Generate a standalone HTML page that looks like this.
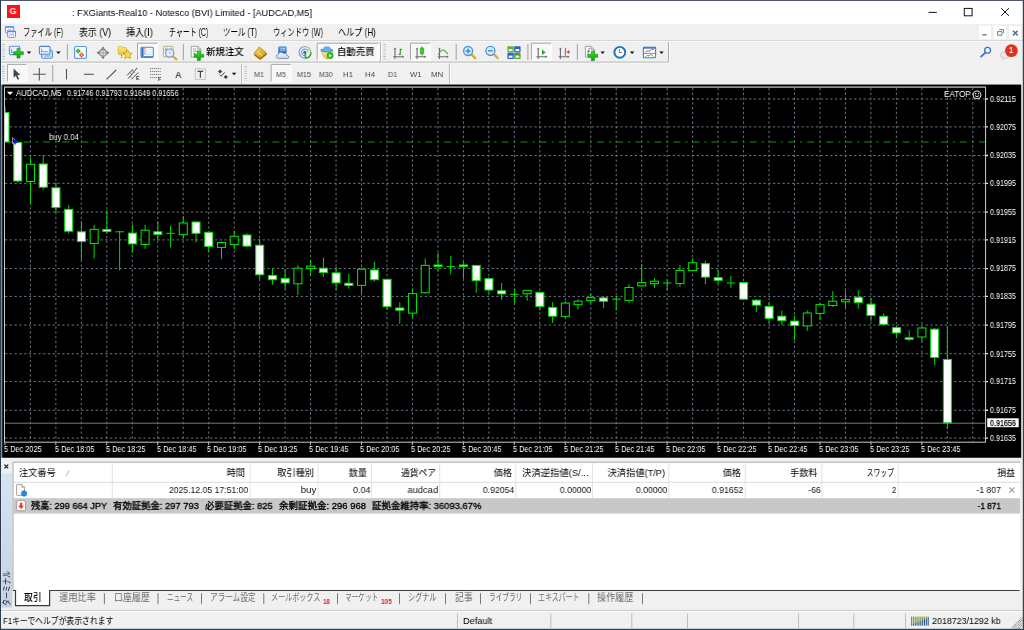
<!DOCTYPE html>
<html lang="ja">
<head>
<meta charset="utf-8">
<title>FXGiants-Real10 - Notesco (BVI) Limited - [AUDCAD,M5]</title>
<style>
html,body{margin:0;padding:0}
body{width:1024px;height:630px;overflow:hidden;position:relative;background:#f0f0f0;font-family:"Liberation Sans","Noto Sans CJK JP",sans-serif;color:#000}
.t{position:absolute;white-space:nowrap;display:block;will-change:transform}
.a{position:absolute}
svg{position:absolute;overflow:visible}

#titlebar{left:1px;top:1px;width:1022px;height:23.3px;background:#fff}
#menubar{left:1px;top:24.3px;width:1022px;height:16.2px;background:#f0f0f0}
#tb1{left:1px;top:41px;width:1022px;height:22px;background:#f0f0f0}
#tb2{left:1px;top:63px;width:1022px;height:21px;background:#f0f0f0}
#chartwin{left:2.2px;top:84.4px;width:1019px;height:373.3px}
#terminal{left:1px;top:457.7px;width:1022px;height:152px;background:#f0f0f0}
#statusbar{left:1px;top:610px;width:1022px;height:19px;background:#f0f0f0}

</style>
</head>
<body>
<div class="a" id="titlebar"></div>
<div class="a" id="menubar"></div>
<div class="a" id="tb1"></div>
<div class="a" id="tb2"></div>
<div class="a" id="chartwin"></div>
<div class="a" id="terminal"></div>
<div class="a" id="statusbar"></div>
<div class="a" style="left:7.1px;top:5.4px;width:12.9px;height:12.9px;background:#fa1418"></div>
<span class="t" id="t1" style="font-size:9.20px;line-height:9.20px;top:7.30px;color:#fff;font-weight:bold;left:13.45px;transform-origin:50% 50%;transform:translateX(-50%) scaleX(0.9642);">G</span>
<span class="t" id="t2" style="font-size:9.60px;line-height:9.60px;top:7.80px;color:#000;left:71.60px;transform-origin:0 50%;transform:scaleX(0.9558);">: FXGiants-Real10 - Notesco (BVI) Limited - [AUDCAD,M5]</span>
<svg class="a" style="left:920px;top:1px" width="103" height="23" viewBox="920 1 103 23"><path d="M928.6 12.4H936.8" stroke="#111" stroke-width="1" fill="none"/><rect x="964.3" y="8.4" width="7.8" height="7.4" stroke="#111" stroke-width="1" fill="none"/><path d="M1001.2 8.2L1008.9 15.8M1008.9 8.2L1001.2 15.8" stroke="#111" stroke-width="1" fill="none"/></svg>
<svg class="a" style="left:4px;top:25px" width="14" height="14" viewBox="4 25 14 14"><rect x="5.4" y="26.7" width="8.3" height="6.2" rx="0.8" fill="#fdfdff" stroke="#6a94f0" stroke-width="1"/><path d="M5.2 27h8.7" stroke="#5c88ee" stroke-width="1.5"/><path d="M7 31l1.4-1.6l1.2 1l1.6-1.6" stroke="#6a94f0" stroke-width="0.8" fill="none"/><rect x="7.6" y="31.2" width="7.9" height="6.1" rx="0.8" fill="#fdfdff" stroke="#6a94f0" stroke-width="1"/><path d="M7.4 31.5h8.3" stroke="#5c88ee" stroke-width="1.5"/><path d="M9.2 35.8l1.2-1.8l1.3 1.2l1.3-1.8l0.9 2.4" stroke="#6a94f0" stroke-width="0.8" fill="none"/></svg>
<span class="t" id="t3" style="font-size:10.30px;line-height:10.30px;top:27.55px;color:#000;left:22.90px;transform-origin:0 50%;transform:scaleX(0.7028);">ファイル (F)</span>
<span class="t" id="t4" style="font-size:10.30px;line-height:10.30px;top:27.55px;color:#000;left:78.60px;transform-origin:0 50%;transform:scaleX(0.8632);">表示 (V)</span>
<span class="t" id="t5" style="font-size:10.30px;line-height:10.30px;top:27.55px;color:#000;left:126.40px;transform-origin:0 50%;transform:scaleX(0.8808);">挿入(I)</span>
<span class="t" id="t6" style="font-size:10.30px;line-height:10.30px;top:27.55px;color:#000;left:168.60px;transform-origin:0 50%;transform:scaleX(0.6747);">チャート (C)</span>
<span class="t" id="t7" style="font-size:10.30px;line-height:10.30px;top:27.55px;color:#000;left:222.90px;transform-origin:0 50%;transform:scaleX(0.7249);">ツール (T)</span>
<span class="t" id="t8" style="font-size:10.30px;line-height:10.30px;top:27.55px;color:#000;left:272.60px;transform-origin:0 50%;transform:scaleX(0.7050);">ウィンドウ (W)</span>
<span class="t" id="t9" style="font-size:10.30px;line-height:10.30px;top:27.55px;color:#000;left:337.90px;transform-origin:0 50%;transform:scaleX(0.7867);">ヘルプ (H)</span>
<div class="a" style="left:978.6px;top:25.7px;width:12.8px;height:13.6px;background:#fff"></div>
<div class="a" style="left:993.6px;top:25.7px;width:12.8px;height:13.6px;background:#fff"></div>
<div class="a" style="left:1008.6px;top:25.7px;width:12.8px;height:13.6px;background:#fff"></div>
<svg class="a" style="left:978px;top:25px" width="45" height="15" viewBox="978 25 45 15"><path d="M982.3 34.8h4.4" stroke="#6a7b95" stroke-width="1.4"/><path d="M999.2 29.6h4.3v3.4M997.6 31.6h4.4v3.6h-4.4z" stroke="#6a7b95" stroke-width="1" fill="none"/><path d="M1013 30.8l4.6 4.6M1017.6 30.8l-4.6 4.6" stroke="#5a6e8c" stroke-width="1.5"/></svg>
<svg class="a" style="left:0;top:40px" width="1024" height="45" viewBox="0 40 1024 45"><defs>
<linearGradient id="gGreen" x1="0" y1="0" x2="0" y2="1"><stop offset="0" stop-color="#3be03b"/><stop offset="1" stop-color="#0aa00a"/></linearGradient>
<linearGradient id="gGold" x1="0" y1="0" x2="1" y2="1"><stop offset="0" stop-color="#f8dc60"/><stop offset="1" stop-color="#c89018"/></linearGradient>
<linearGradient id="gBlue" x1="0" y1="0" x2="0" y2="1"><stop offset="0" stop-color="#5aa8f0"/><stop offset="1" stop-color="#1c62c0"/></linearGradient>
<linearGradient id="gCloud" x1="0" y1="0" x2="0" y2="1"><stop offset="0" stop-color="#ffffff"/><stop offset="1" stop-color="#c4d0e4"/></linearGradient>
<linearGradient id="gFold" x1="0" y1="0" x2="0" y2="1"><stop offset="0" stop-color="#fbe98a"/><stop offset="1" stop-color="#e8c440"/></linearGradient>
</defs><path d="M1 40.6H1023" stroke="#d4d4d4" stroke-width="1"/><path d="M1 41.5H1023" stroke="#fafafa" stroke-width="0.8"/><path d="M1 62.2H668.5V42" stroke="#aaaaaa" stroke-width="1" fill="none"/><path d="M1 63.2H669.5V42" stroke="#fbfbfb" stroke-width="0.9" fill="none"/><path d="M380.5 42V62" stroke="#b4b4b4" stroke-width="1"/><path d="M381.5 42V62" stroke="#fbfbfb" stroke-width="0.9"/><path d="M241.6 63.7V84" stroke="#b4b4b4" stroke-width="1"/><path d="M242.6 63.7V84" stroke="#fbfbfb" stroke-width="0.9"/><path d="M449.4 63.7V84" stroke="#b4b4b4" stroke-width="1"/><path d="M450.4 63.7V84" stroke="#fbfbfb" stroke-width="0.9"/><path d="M3.5 44.0V60.0" stroke="#b8b8b8" stroke-width="2.4" stroke-dasharray="0.9 1.5"/><path d="M384.5 44.0V60.0" stroke="#b8b8b8" stroke-width="2.4" stroke-dasharray="0.9 1.5"/><path d="M3.5 66.0V81.0" stroke="#b8b8b8" stroke-width="2.4" stroke-dasharray="0.9 1.5"/><path d="M245.6 66.0V81.0" stroke="#b8b8b8" stroke-width="2.4" stroke-dasharray="0.9 1.5"/><path d="M67.4 44.0V60.0" stroke="#a8a8a8" stroke-width="1.1"/><path d="M183.4 44.0V60.0" stroke="#a8a8a8" stroke-width="1.1"/><path d="M456.2 44.0V60.0" stroke="#a8a8a8" stroke-width="1.1"/><path d="M527.9 44.0V60.0" stroke="#a8a8a8" stroke-width="1.1"/><path d="M577.4 44.0V60.0" stroke="#a8a8a8" stroke-width="1.1"/><path d="M52.7 65.0V82.0" stroke="#a8a8a8" stroke-width="1.1"/><rect x="137.5" y="43.2" width="20.0" height="17.0" fill="#f8f8f8"/><path d="M137.5 60.2V43.2H157.5" stroke="#a6a6a6" stroke-width="1" fill="none"/><path d="M157.5 43.2V60.2H137.5" stroke="#fff" stroke-width="1" fill="none"/><rect x="317.2" y="43.2" width="61.6" height="17.0" fill="#f8f8f8"/><path d="M317.2 60.2V43.2H378.8" stroke="#a6a6a6" stroke-width="1" fill="none"/><path d="M378.8 43.2V60.2H317.2" stroke="#fff" stroke-width="1" fill="none"/><rect x="410.5" y="43.2" width="19.8" height="17.0" fill="#f8f8f8"/><path d="M410.5 60.2V43.2H430.3" stroke="#a6a6a6" stroke-width="1" fill="none"/><path d="M430.3 43.2V60.2H410.5" stroke="#fff" stroke-width="1" fill="none"/><rect x="531.4" y="43.2" width="20.0" height="17.0" fill="#f8f8f8"/><path d="M531.4 60.2V43.2H551.4" stroke="#a6a6a6" stroke-width="1" fill="none"/><path d="M551.4 43.2V60.2H531.4" stroke="#fff" stroke-width="1" fill="none"/><rect x="7.5" y="64.4" width="19.3" height="17.3" fill="#f8f8f8"/><path d="M7.5 81.7V64.4H26.8" stroke="#a6a6a6" stroke-width="1" fill="none"/><path d="M26.8 64.4V81.7H7.5" stroke="#fff" stroke-width="1" fill="none"/><rect x="271.1" y="64.4" width="20.0" height="17.3" fill="#f8f8f8"/><path d="M271.1 81.7V64.4H291.1" stroke="#a6a6a6" stroke-width="1" fill="none"/><path d="M291.1 64.4V81.7H271.1" stroke="#fff" stroke-width="1" fill="none"/><path d="M26.8 51.6h4.4l-2.2 2.4z" fill="#111"/><path d="M56.2 51.6h4.4l-2.2 2.4z" fill="#111"/><path d="M600.5 51.6h4.4l-2.2 2.4z" fill="#111"/><path d="M629.9 51.6h4.4l-2.2 2.4z" fill="#111"/><path d="M659.3 51.6h4.4l-2.2 2.4z" fill="#111"/><path d="M231.9 72.8h4.4l-2.2 2.4z" fill="#111"/><rect x="9.4" y="46.2" width="10.2" height="8.4" rx="1.2" fill="#e6f0fb" stroke="#5a93d6" stroke-width="1.1"/><path d="M11.5 49v3.6M11 52.3h6" stroke="#5a7fb0" stroke-width="0.7" fill="none"/><path d="M17.00 48.40h3.00v3.30h3.30v3.00h-3.30v3.30h-3.00v-3.30h-3.30v-3.00h3.30z" fill="url(#gGreen)" stroke="#0c8a0c" stroke-width="0.6"/><rect x="41.6" y="50.3" width="10.8" height="8" rx="1.2" fill="#d8e6f6" stroke="#5a93d6" stroke-width="1.1"/><rect x="39.4" y="46.4" width="10.6" height="7.8" rx="1.2" fill="#eef5fc" stroke="#4a86cf" stroke-width="1.1"/><path d="M41.6 48.4v3.8M41.2 51.7h7.2" stroke="#5a7fb0" stroke-width="0.7" fill="none"/><path d="M44.5 56h6" stroke="#5a7fb0" stroke-width="0.7"/><rect x="74.6" y="46.5" width="11.8" height="11.8" rx="1.3" fill="#fff" stroke="#5b9be0" stroke-width="1.2"/><path d="M78.2 48.2l2.6 2.8l-2.6 2.8l-2.6-2.8z" fill="#2aa52a"/><path d="M81.6 52l2.7 2.9l-2.7 2.9l-2.7-2.9z" fill="#e8602c"/><path d="M78.2 49.6v2.4M81.6 53.6v2.4" stroke="#fff" stroke-width="0.6"/><circle cx="103" cy="52.8" r="3.4" fill="#dedede" stroke="#808080" stroke-width="1.1"/><path d="M103 48.4V57.2M98.6 52.8H107.4" stroke="#9c9c9c" stroke-width="0.8"/><path d="M103 46.4l1.7 2.4h-3.4zM103 59.2l1.7-2.4h-3.4zM96.6 52.8l2.4-1.7v3.4zM109.4 52.8l-2.4-1.7v3.4z" fill="#707070"/><path d="M118.2 47.4q0-1 1-1h2.6l1 1.2h3q0.8 0 0.8 0.9v5.1q0 0.8-0.8 0.8h-6.6q-1 0-1-1z" fill="url(#gFold)" stroke="#d8b030" stroke-width="0.7"/><path d="M121.5 55.2v3.6" stroke="#333" stroke-width="0.8" stroke-dasharray="1 0.8"/><path d="M127.6 49.8l1.4 3l3.2 0.4l-2.4 2.2l0.7 3.2l-2.9-1.6l-2.9 1.6l0.7-3.2l-2.4-2.2l3.2-0.4z" fill="#f6da50" stroke="#c79a1c" stroke-width="0.8" stroke-linejoin="round"/><rect x="141" y="47.2" width="12.3" height="10.2" rx="1.1" fill="#fff" stroke="#4a86d2" stroke-width="1.1"/><rect x="141.4" y="47.7" width="2.2" height="9.2" fill="#3a70bc"/><path d="M143.8 56.6h9.2" stroke="#4a86d2" stroke-width="1"/><path d="M144.2 49.9H152.8M144.2 52.2H152.8M144.2 54.5H152.8" stroke="#cfe0f8" stroke-width="1"/><path d="M144.3 48.7h1.2M144.3 53.4h1.2" stroke="#e03030" stroke-width="0.9"/><path d="M144.3 51.1h1.2" stroke="#447744" stroke-width="0.9"/><rect x="163.4" y="46.4" width="9.6" height="10.4" rx="0.8" fill="#f6f2e6" stroke="#b8a880" stroke-width="0.9"/><path d="M165.4 48v3M167 47.6v2.4M171 48v2.6" stroke="#7a86a0" stroke-width="0.7"/><path d="M172.8 56.2l3.6 3.2" stroke="#dcaa28" stroke-width="2.2" stroke-linecap="round"/><circle cx="169.7" cy="53.1" r="4.1" fill="#e4f0fb" fill-opacity="0.92" stroke="#66a2e2" stroke-width="1.2"/><path d="M169.6 50.8v2.4h1.6" stroke="#8aaad0" stroke-width="0.7" fill="none"/><path d="M191.20 46.30h6.60l3.00 3.00v7.80h-9.60z" fill="#fdfdfd" stroke="#8c8c8c" stroke-width="0.8" stroke-linejoin="round"/><path d="M197.80 46.30v3.00h3.00" fill="#ddd" stroke="#8c8c8c" stroke-width="0.7"/><path d="M193 49h3M193 51.2h5.4M193 53.4h2.6" stroke="#7a7a7a" stroke-width="0.7"/><path d="M197.40 50.90h3.00v3.30h3.30v3.00h-3.30v3.30h-3.00v-3.30h-3.30v-3.00h3.30z" fill="url(#gGreen)" stroke="#0c8a0c" stroke-width="0.6"/><path d="M254 53.6l5.2-6.6l7.5 6.2l-6.6 5.3z" fill="url(#gGold)" stroke="#b48418" stroke-width="0.8" stroke-linejoin="round"/><path d="M254.2 54.5l6 4.5l6.4-5.1" stroke="#a06c10" stroke-width="1.5" fill="none"/><path d="M257 51.6l5.6 4.4" stroke="#fbe88a" stroke-width="0.8"/><rect x="278.2" y="46.3" width="8.4" height="7.4" rx="1.2" fill="url(#gBlue)"/><path d="M281 47.8v3.4M282.4 48.6h2.8M282.4 50.2h2.8" stroke="#e6f2ff" stroke-width="0.8"/><path d="M278.6 58.5q-2.4 0-2.4-2.1q0-2 2.2-2q0.5-2.1 2.7-2.1q1.7 0 2.5 1.5q0.9-0.7 2.1-0.2q1.1 0.6 1 1.8q2.2 0.1 2.2 1.6q0 1.5-2 1.5z" fill="url(#gCloud)" stroke="#7088b4" stroke-width="0.8"/><path d="M304.9 49.1a3.2 3.2 0 0 0 0 6.4M304.9 46.5a5.8 5.8 0 0 0 0 11.6" stroke="#6a8cd8" stroke-width="1.1" fill="none" opacity="0.9"/><path d="M304.9 49.1a3.2 3.2 0 0 1 3.2 3.2M304.9 46.5a5.8 5.8 0 0 1 5.8 5.8" stroke="#7ab87a" stroke-width="1.1" fill="none" opacity="0.9"/><path d="M310.9 52.3a6 6 0 0 1-5 5.9" stroke="#3ea63e" stroke-width="1.7" fill="none"/><path d="M305.4 53v5.6" stroke="#3ea63e" stroke-width="1.7"/><circle cx="304.8" cy="52.2" r="1.5" fill="#2a68d0"/><path d="M321.2 51h11.6l-1.6 4.6l-4 3.8l-3.6-2.6z" fill="url(#gFold)" stroke="#d0a828" stroke-width="0.6" stroke-linejoin="round"/><ellipse cx="326.8" cy="50.3" rx="6.4" ry="2.1" fill="#3f96dc"/><ellipse cx="326.9" cy="48.5" rx="3.5" ry="2.3" fill="#62b0ec"/><path d="M322 50.2q4.8 1.6 9.6 0" stroke="#8ccaf4" stroke-width="0.6" fill="none"/><circle cx="330.1" cy="55.6" r="3.3" fill="#18a818"/><circle cx="330.1" cy="55.6" r="2.5" fill="#3cd03c" opacity="0.55"/><path d="M329.1 53.9l2.9 1.7l-2.9 1.7z" fill="#fff"/><path d="M395.0 48.4V58.9M393.2 56.7H403.4" stroke="#6a6a6a" stroke-width="1.1" fill="none"/><path d="M395.0 47.4l1.3 1.9h-2.6zM404.2 56.7l-1.9 1.3v-2.6z" fill="#6a6a6a"/><path d="M400.3 48.8V55M400.3 49.4h1.6M400.3 54.4h-1.6" stroke="#2aa02a" stroke-width="1.1" fill="none"/><path d="M417.1 48.4V58.9M415.3 56.7H425.5" stroke="#6a6a6a" stroke-width="1.1" fill="none"/><path d="M417.1 47.4l1.3 1.9h-2.6zM426.3 56.7l-1.9 1.3v-2.6z" fill="#6a6a6a"/><path d="M422 46.4V55.6" stroke="#2aa02a" stroke-width="0.9"/><rect x="420.3" y="47.9" width="3.4" height="6" rx="0.6" fill="#2ed02e" stroke="#1a9a1a" stroke-width="0.6"/><path d="M439.5 48.4V58.9M437.7 56.7H447.9" stroke="#6a6a6a" stroke-width="1.1" fill="none"/><path d="M439.5 47.4l1.3 1.9h-2.6zM448.7 56.7l-1.9 1.3v-2.6z" fill="#6a6a6a"/><path d="M438.2 54.6q3-4.6 4.9-4.6q1.4 0 4.9 4.2" stroke="#3aa83a" stroke-width="1.1" fill="none"/><path d="M471.7 54.6l3.6 3.6" stroke="#d8aa28" stroke-width="2.2" stroke-linecap="round"/><circle cx="468.1" cy="51.0" r="4.5" fill="#d8ecfb" stroke="#4a92dc" stroke-width="1.3"/><path d="M465.6 51.0h5M468.1 48.5v5" stroke="#3a82d0" stroke-width="1.3"/><path d="M494.0 54.4l3.6 3.6" stroke="#d8aa28" stroke-width="2.2" stroke-linecap="round"/><circle cx="490.4" cy="50.8" r="4.5" fill="#d8ecfb" stroke="#4a92dc" stroke-width="1.3"/><path d="M487.9 50.8h5" stroke="#3a82d0" stroke-width="1.3"/><rect x="507.4" y="46.2" width="6.4" height="6.2" rx="0.8" fill="#5cae34"/><rect x="508.7" y="49.0" width="3.8" height="2.2" fill="#f4f8ff"/><rect x="514.2" y="46.2" width="6.4" height="6.2" rx="0.8" fill="#2c5ccc"/><rect x="515.5" y="49.0" width="3.8" height="2.2" fill="#f4f8ff"/><rect x="507.4" y="52.8" width="6.4" height="6.2" rx="0.8" fill="#2c62d0"/><rect x="508.7" y="55.6" width="3.8" height="2.2" fill="#f4f8ff"/><rect x="514.2" y="52.8" width="6.4" height="6.2" rx="0.8" fill="#4aa42c"/><rect x="515.5" y="55.6" width="3.8" height="2.2" fill="#f4f8ff"/><path d="M538.2 48.4V58.9M536.4 56.7H546.6" stroke="#6a6a6a" stroke-width="1.1" fill="none"/><path d="M538.2 47.4l1.3 1.9h-2.6zM547.4 56.7l-1.9 1.3v-2.6z" fill="#6a6a6a"/><path d="M542 49.5l3.6 2.7l-3.6 2.7z" fill="#22b022"/><path d="M560.4 48.4V58.9M558.6 56.7H568.8" stroke="#6a6a6a" stroke-width="1.1" fill="none"/><path d="M560.4 47.4l1.3 1.9h-2.6zM569.6 56.7l-1.9 1.3v-2.6z" fill="#6a6a6a"/><path d="M565.4 47.9V55.8" stroke="#3a86c8" stroke-width="1.1"/><path d="M566.4 52l2.6-2v1.2h0.9v1.6h-0.9v1.2z" fill="#e0501c"/><path d="M585.40 46.30h5.80l3.00 3.00v7.80h-8.80z" fill="#fdfdfd" stroke="#8c8c8c" stroke-width="0.8" stroke-linejoin="round"/><path d="M591.20 46.30v3.00h3.00" fill="#ddd" stroke="#8c8c8c" stroke-width="0.7"/><path d="M590.4 48.4q-1.6-0.4-1.8 1.4l-0.6 4.6q-0.2 1.2-1.2 1M587.2 51.2h2.8" stroke="#555" stroke-width="0.7" fill="none"/><path d="M591.40 51.00h3.00v3.30h3.30v3.00h-3.30v3.30h-3.00v-3.30h-3.30v-3.00h3.30z" fill="url(#gGreen)" stroke="#0c8a0c" stroke-width="0.6"/><circle cx="619.8" cy="52.3" r="5.4" fill="#fbfdff" stroke="#1c70c8" stroke-width="1.9"/><path d="M619.4 49.2v3.3h2.6" stroke="#555" stroke-width="0.8" fill="none"/><rect x="643.4" y="47.2" width="12.2" height="10.6" rx="0.8" fill="#fff" stroke="#3c7cd2" stroke-width="1.1"/><path d="M643.4 47.8h12.2" stroke="#3c7cd2" stroke-width="1.8"/><path d="M643.6 53.4h11.8" stroke="#3c7cd2" stroke-width="0.8"/><path d="M645.4 52l2.4-1.4l1.6 0.6l2.2-1.6l2.4-0.4" stroke="#d8502c" stroke-width="1" fill="none"/><path d="M645.4 56.8l2.2-1.4l1.4 0.6l2-1.6l2.6 2.2" stroke="#3aa83a" stroke-width="0.9" fill="none"/><circle cx="987.6" cy="50.2" r="2.9" fill="#f4f8ff" stroke="#3a6ad0" stroke-width="1.3"/><path d="M985.4 52.6l-4.4 4" stroke="#3a6ad0" stroke-width="1.7" stroke-linecap="round"/><path d="M1000.5 55.2q0-3.6 4.4-3.6q4.4 0 4.4 3.4q0 3.2-4.6 3.2l-2 1.4l0.3-1.8q-2.5-0.8-2.5-2.6z" fill="#e8e8e8" stroke="#b8b8b8" stroke-width="0.6"/><circle cx="1011.4" cy="50.7" r="6.4" fill="#e03020"/><path d="M13.6 68.4v9.4l2.2-2.1l1.9 4l1.5-0.7l-1.9-3.9h3z" fill="#444"/><path d="M39.3 68.1V80.4M33 74.3H45.7" stroke="#555" stroke-width="1.1"/><path d="M66.5 69V79.5" stroke="#555" stroke-width="1.1"/><path d="M84 74.3H93.8" stroke="#555" stroke-width="1.1"/><path d="M106.5 79.3L116.2 70" stroke="#555" stroke-width="1.1"/><path d="M127.1 75.4L132.9 69.3M128.1 78.6L137.1 67.9M131.5 79.3L138.3 72.5" stroke="#4a4a4a" stroke-width="1" fill="none"/><path d="M129.2 72.2l3.6 3M131.4 70l3.8 3.2M130 76.4l1.6 1.2" stroke="#6a6a6a" stroke-width="0.7" fill="none"/><path d="M150 68.6h10.8M150 71.5h10.8M150 74.5h10.8M150 77.6h8" stroke="#707070" stroke-width="0.9" stroke-dasharray="1.3 0.7"/><rect x="195.2" y="68.8" width="10.2" height="10.6" fill="none" stroke="#888" stroke-width="0.8" stroke-dasharray="1 0.9"/><path d="M197.6 71.4h5.6M200.4 71.4v6.4" stroke="#444" stroke-width="1.2"/><path d="M220.1 69.6l2.2 2l-2.2 2l-2.2-2zM225.8 74.9l2.2 2l-2.2 2l-2.2-2z" fill="#444"/><path d="M219.6 74.6l1.6 1.6l3.4-3.8" stroke="#444" stroke-width="1" fill="none"/></svg>
<span class="t" id="t10" style="font-size:9.60px;line-height:9.60px;top:46.90px;color:#000;font-weight:500;left:206.00px;transform-origin:0 50%;transform:scaleX(0.9850);">新規注文</span>
<span class="t" id="t11" style="font-size:9.60px;line-height:9.60px;top:46.90px;color:#000;font-weight:500;left:336.90px;transform-origin:0 50%;transform:scaleX(0.9798);">自動売買</span>
<span class="t" id="t12" style="font-size:8.60px;line-height:8.60px;top:46.30px;color:#fff;font-weight:bold;left:1011.40px;transform-origin:50% 50%;transform:translateX(-50%) scaleX(0.7529);">1</span>
<span class="t" id="t13" style="font-size:9.80px;line-height:9.80px;top:69.50px;color:#555;font-weight:bold;left:174.80px;transform-origin:0 50%;transform:scaleX(0.9325);">A</span>
<span class="t" id="t14" style="font-size:5.40px;line-height:5.40px;top:76.30px;color:#333;font-weight:bold;left:135.90px;transform-origin:0 50%;transform:scaleX(0.9420);">E</span>
<span class="t" id="t15" style="font-size:5.40px;line-height:5.40px;top:76.60px;color:#333;font-weight:bold;left:158.20px;transform-origin:0 50%;">F</span>
<span class="t" id="t16" style="font-size:7.80px;line-height:7.80px;top:70.50px;color:#4a4a4a;left:253.50px;transform-origin:0 50%;transform:scaleX(0.9314);">M1</span>
<span class="t" id="t17" style="font-size:7.80px;line-height:7.80px;top:70.50px;color:#4a4a4a;left:275.90px;transform-origin:0 50%;transform:scaleX(0.9222);">M5</span>
<span class="t" id="t18" style="font-size:7.80px;line-height:7.80px;top:70.50px;color:#4a4a4a;left:296.60px;transform-origin:0 50%;transform:scaleX(0.9228);">M15</span>
<span class="t" id="t19" style="font-size:7.80px;line-height:7.80px;top:70.50px;color:#4a4a4a;left:319.00px;transform-origin:0 50%;transform:scaleX(0.8964);">M30</span>
<span class="t" id="t20" style="font-size:7.80px;line-height:7.80px;top:70.50px;color:#4a4a4a;left:343.20px;transform-origin:0 50%;transform:scaleX(0.9530);">H1</span>
<span class="t" id="t21" style="font-size:7.80px;line-height:7.80px;top:70.50px;color:#4a4a4a;left:364.70px;transform-origin:0 50%;transform:scaleX(1.0132);">H4</span>
<span class="t" id="t22" style="font-size:7.80px;line-height:7.80px;top:70.50px;color:#4a4a4a;left:388.00px;transform-origin:0 50%;transform:scaleX(0.9229);">D1</span>
<span class="t" id="t23" style="font-size:7.80px;line-height:7.80px;top:70.50px;color:#4a4a4a;left:409.70px;transform-origin:0 50%;transform:scaleX(0.9741);">W1</span>
<span class="t" id="t24" style="font-size:7.80px;line-height:7.80px;top:70.50px;color:#4a4a4a;left:430.90px;transform-origin:0 50%;transform:scaleX(1.0049);">MN</span>
<svg class="a" style="left:0;top:84px" width="1024" height="374" viewBox="0 84 1024 374"><rect x="1" y="84.55" width="1.3" height="373.2" fill="#8c8c8c"/><rect x="2.2" y="84.55" width="1019" height="373.2" fill="#000"/><defs><clipPath id="plot"><rect x="5" y="87.9" width="980" height="354"/></clipPath></defs><path d="M5 99.00H985.2M5 126.86H985.2M5 155.52H985.2M5 183.38H985.2M5 212.04H985.2M5 239.90H985.2M5 268.55H985.2M5 296.41H985.2M5 325.07H985.2M5 353.72H985.2M5 381.58H985.2M5 410.24H985.2M5 438.10H985.2" stroke="#6c7c8c" stroke-width="0.95" stroke-dasharray="2.3 2.47" fill="none" clip-path="url(#plot)"/><path d="M30.40 88V442M55.87 88V442M81.34 88V442M106.81 88V442M132.28 88V442M157.75 88V442M183.22 88V442M208.69 88V442M234.16 88V442M259.63 88V442M285.10 88V442M310.57 88V442M336.04 88V442M361.51 88V442M386.98 88V442M412.45 88V442M437.92 88V442M463.39 88V442M488.86 88V442M514.33 88V442M539.80 88V442M565.27 88V442M590.74 88V442M616.21 88V442M641.68 88V442M667.15 88V442M692.62 88V442M718.09 88V442M743.56 88V442M769.03 88V442M794.50 88V442M819.97 88V442M845.44 88V442M870.91 88V442M896.38 88V442M921.85 88V442M947.32 88V442M972.79 88V442" stroke="#6c7c8c" stroke-width="0.95" stroke-dasharray="2.3 2.47" fill="none" clip-path="url(#plot)"/><path d="M4.9 142H985.2" stroke="#1c8c1c" stroke-width="1.15" stroke-dasharray="7.0 4.94 2.2 4.96" fill="none"/><path d="M5 423.2H985.2" stroke="#6c7a89" stroke-width="1" fill="none"/><g clip-path="url(#plot)"><path d="M5.00 106.70V141.90M17.73 141.50V182.50M30.47 157.50V204.40M43.20 155.20V189.70M55.94 182.40V212.80M68.67 205.20V233.70M81.41 221.40V260.00M94.14 224.90V258.50M106.88 210.30V233.70M119.61 231.00V270.40M132.35 224.50V252.70M145.08 224.90V248.75M157.82 221.60V240.20M170.56 225.90V247.40M183.29 216.10V238.60M196.02 221.50V242.50M208.76 231.50V251.90M221.50 241.50V259.10M234.23 230.80V249.30M246.96 233.40V247.10M259.70 238.90V279.30M272.44 268.20V284.80M285.17 269.20V289.10M297.90 265.10V295.00M310.64 259.80V275.00M323.38 257.50V277.00M336.11 267.00V290.10M348.84 273.50V288.70M361.58 267.60V293.60M374.31 261.80V281.70M387.05 278.70V310.00M399.78 302.20V323.90M412.52 289.10V317.00M425.25 258.50V293.60M437.99 252.90V271.30M450.72 255.90V274.40M463.46 261.70V278.70M476.19 265.00V292.80M488.93 277.10V293.75M501.66 283.00V299.80M514.40 289.50V303.10M527.13 290.00V300.80M539.87 291.80V310.40M552.61 302.10V323.00M565.34 300.80V317.80M578.07 299.20V309.40M590.81 293.40V303.70M603.54 296.30V308.00M616.28 296.30V310.40M629.01 284.20V303.10M641.75 264.10V286.50M654.49 278.10V287.90M667.22 279.70V290.40M679.95 265.00V287.10M692.69 258.20V270.90M705.42 260.70V284.00M718.16 270.30V283.60M730.89 276.20V287.90M743.63 282.20V299.60M756.37 299.20V311.90M769.10 301.80V322.70M781.83 310.40V325.00M794.57 316.00V340.20M807.30 310.40V330.90M820.04 302.80V319.80M832.77 291.10V307.10M845.51 290.10V308.10M858.25 290.10V308.70M870.98 297.90V321.20M883.71 313.40V325.10M896.45 325.30V337.40M909.18 330.20V341.30M921.92 326.10V341.90M934.65 328.00V365.30M947.39 326.20V428.70" stroke="#00e400" stroke-width="0.95" fill="none"/><rect x="1.00" y="112.60" width="8.0" height="29.30" fill="#fff" stroke="#00e400" stroke-width="1.05"/><rect x="13.73" y="142.50" width="8.0" height="38.50" fill="#fff" stroke="#00e400" stroke-width="1.05"/><rect x="26.47" y="164.30" width="8.0" height="17.20" fill="#000" stroke="#00e400" stroke-width="1.05"/><rect x="39.20" y="164.00" width="8.0" height="23.20" fill="#fff" stroke="#00e400" stroke-width="1.05"/><rect x="51.94" y="187.80" width="8.0" height="19.70" fill="#fff" stroke="#00e400" stroke-width="1.05"/><rect x="64.67" y="209.40" width="8.0" height="21.80" fill="#fff" stroke="#00e400" stroke-width="1.05"/><rect x="77.41" y="231.80" width="8.0" height="9.70" fill="#fff" stroke="#00e400" stroke-width="1.05"/><rect x="90.14" y="229.40" width="8.0" height="14.10" fill="#000" stroke="#00e400" stroke-width="1.05"/><rect x="102.88" y="229.40" width="8.0" height="2.00" fill="#fff" stroke="#00e400" stroke-width="1.05"/><path d="M115.41 231.80H123.81" stroke="#00e400" stroke-width="1"/><rect x="128.35" y="233.10" width="8.0" height="10.80" fill="#fff" stroke="#00e400" stroke-width="1.05"/><rect x="141.08" y="230.20" width="8.0" height="14.30" fill="#000" stroke="#00e400" stroke-width="1.05"/><rect x="153.82" y="231.80" width="8.0" height="2.50" fill="#fff" stroke="#00e400" stroke-width="1.05"/><path d="M166.36 233.30H174.75" stroke="#00e400" stroke-width="1"/><rect x="179.29" y="223.00" width="8.0" height="11.70" fill="#000" stroke="#00e400" stroke-width="1.05"/><rect x="192.02" y="222.00" width="8.0" height="11.30" fill="#fff" stroke="#00e400" stroke-width="1.05"/><rect x="204.76" y="232.30" width="8.0" height="14.10" fill="#fff" stroke="#00e400" stroke-width="1.05"/><rect x="217.50" y="242.50" width="8.0" height="4.90" fill="#000" stroke="#00e400" stroke-width="1.05"/><rect x="230.23" y="236.30" width="8.0" height="8.30" fill="#000" stroke="#00e400" stroke-width="1.05"/><rect x="242.96" y="235.00" width="8.0" height="11.10" fill="#fff" stroke="#00e400" stroke-width="1.05"/><rect x="255.70" y="245.20" width="8.0" height="29.60" fill="#fff" stroke="#00e400" stroke-width="1.05"/><rect x="268.44" y="275.40" width="8.0" height="4.30" fill="#fff" stroke="#00e400" stroke-width="1.05"/><rect x="281.17" y="278.40" width="8.0" height="4.50" fill="#fff" stroke="#00e400" stroke-width="1.05"/><rect x="293.90" y="268.20" width="8.0" height="15.60" fill="#000" stroke="#00e400" stroke-width="1.05"/><rect x="306.64" y="266.10" width="8.0" height="2.50" fill="#000" stroke="#00e400" stroke-width="1.05"/><rect x="319.38" y="268.20" width="8.0" height="4.30" fill="#fff" stroke="#00e400" stroke-width="1.05"/><rect x="332.11" y="272.90" width="8.0" height="10.00" fill="#fff" stroke="#00e400" stroke-width="1.05"/><rect x="344.84" y="283.20" width="8.0" height="2.20" fill="#fff" stroke="#00e400" stroke-width="1.05"/><rect x="357.58" y="269.20" width="8.0" height="16.20" fill="#000" stroke="#00e400" stroke-width="1.05"/><rect x="370.31" y="270.00" width="8.0" height="9.70" fill="#fff" stroke="#00e400" stroke-width="1.05"/><rect x="383.05" y="279.30" width="8.0" height="27.40" fill="#fff" stroke="#00e400" stroke-width="1.05"/><rect x="395.78" y="308.00" width="8.0" height="2.20" fill="#fff" stroke="#00e400" stroke-width="1.05"/><rect x="408.52" y="293.60" width="8.0" height="19.50" fill="#000" stroke="#00e400" stroke-width="1.05"/><rect x="421.25" y="265.40" width="8.0" height="27.30" fill="#000" stroke="#00e400" stroke-width="1.05"/><rect x="433.99" y="265.00" width="8.0" height="1.40" fill="#fff" stroke="#00e400" stroke-width="1.05"/><path d="M446.52 266.60H454.92" stroke="#00e400" stroke-width="1"/><rect x="459.46" y="265.00" width="8.0" height="1.40" fill="#fff" stroke="#00e400" stroke-width="1.05"/><rect x="472.19" y="265.40" width="8.0" height="15.30" fill="#fff" stroke="#00e400" stroke-width="1.05"/><rect x="484.93" y="278.70" width="8.0" height="11.30" fill="#fff" stroke="#00e400" stroke-width="1.05"/><rect x="497.66" y="290.80" width="8.0" height="3.10" fill="#fff" stroke="#00e400" stroke-width="1.05"/><path d="M510.20 294.30H518.60" stroke="#00e400" stroke-width="1"/><rect x="523.13" y="290.40" width="8.0" height="3.35" fill="#000" stroke="#00e400" stroke-width="1.05"/><rect x="535.87" y="292.40" width="8.0" height="14.00" fill="#fff" stroke="#00e400" stroke-width="1.05"/><rect x="548.61" y="307.40" width="8.0" height="8.80" fill="#fff" stroke="#00e400" stroke-width="1.05"/><rect x="561.34" y="303.10" width="8.0" height="13.30" fill="#000" stroke="#00e400" stroke-width="1.05"/><rect x="574.07" y="301.20" width="8.0" height="3.50" fill="#000" stroke="#00e400" stroke-width="1.05"/><rect x="586.81" y="297.70" width="8.0" height="2.90" fill="#000" stroke="#00e400" stroke-width="1.05"/><rect x="599.54" y="297.90" width="8.0" height="3.30" fill="#fff" stroke="#00e400" stroke-width="1.05"/><path d="M612.08 299.20H620.48" stroke="#00e400" stroke-width="1"/><rect x="625.01" y="287.50" width="8.0" height="12.90" fill="#000" stroke="#00e400" stroke-width="1.05"/><rect x="637.75" y="282.60" width="8.0" height="3.30" fill="#000" stroke="#00e400" stroke-width="1.05"/><rect x="650.49" y="281.25" width="8.0" height="2.35" fill="#000" stroke="#00e400" stroke-width="1.05"/><path d="M663.02 283.00H671.42" stroke="#00e400" stroke-width="1"/><rect x="675.95" y="270.50" width="8.0" height="13.10" fill="#000" stroke="#00e400" stroke-width="1.05"/><rect x="688.69" y="262.70" width="8.0" height="7.80" fill="#000" stroke="#00e400" stroke-width="1.05"/><rect x="701.42" y="263.70" width="8.0" height="13.40" fill="#fff" stroke="#00e400" stroke-width="1.05"/><rect x="714.16" y="277.70" width="8.0" height="2.60" fill="#fff" stroke="#00e400" stroke-width="1.05"/><path d="M726.69 283.00H735.10" stroke="#00e400" stroke-width="1"/><rect x="739.63" y="282.60" width="8.0" height="16.60" fill="#fff" stroke="#00e400" stroke-width="1.05"/><rect x="752.37" y="300.20" width="8.0" height="4.90" fill="#fff" stroke="#00e400" stroke-width="1.05"/><rect x="765.10" y="306.40" width="8.0" height="12.00" fill="#fff" stroke="#00e400" stroke-width="1.05"/><rect x="777.83" y="316.20" width="8.0" height="4.50" fill="#fff" stroke="#00e400" stroke-width="1.05"/><rect x="790.57" y="321.10" width="8.0" height="4.50" fill="#fff" stroke="#00e400" stroke-width="1.05"/><rect x="803.30" y="313.00" width="8.0" height="12.90" fill="#000" stroke="#00e400" stroke-width="1.05"/><rect x="816.04" y="304.60" width="8.0" height="8.80" fill="#000" stroke="#00e400" stroke-width="1.05"/><rect x="828.77" y="301.25" width="8.0" height="4.25" fill="#000" stroke="#00e400" stroke-width="1.05"/><rect x="841.51" y="299.70" width="8.0" height="2.10" fill="#000" stroke="#00e400" stroke-width="1.05"/><rect x="854.25" y="297.30" width="8.0" height="5.30" fill="#fff" stroke="#00e400" stroke-width="1.05"/><rect x="866.98" y="304.20" width="8.0" height="11.30" fill="#fff" stroke="#00e400" stroke-width="1.05"/><rect x="879.71" y="316.30" width="8.0" height="8.00" fill="#fff" stroke="#00e400" stroke-width="1.05"/><rect x="892.45" y="327.60" width="8.0" height="5.30" fill="#fff" stroke="#00e400" stroke-width="1.05"/><rect x="905.18" y="337.80" width="8.0" height="1.50" fill="#fff" stroke="#00e400" stroke-width="1.05"/><rect x="917.92" y="328.00" width="8.0" height="9.00" fill="#000" stroke="#00e400" stroke-width="1.05"/><rect x="930.65" y="329.20" width="8.0" height="28.30" fill="#fff" stroke="#00e400" stroke-width="1.05"/><rect x="943.39" y="359.40" width="8.0" height="63.40" fill="#fff" stroke="#00e400" stroke-width="1.05"/></g><path d="M4 87.15H986" stroke="#8e8e8e" stroke-width="1.7" fill="none"/><path d="M4.5 442.4V87.4M985.6 87.4V442.4" stroke="#d0d0d0" stroke-width="1" fill="none"/><path d="M4.5 442.2H985.5" stroke="#c8c8c8" stroke-width="1" fill="none"/><path d="M985.5 99.00h2.5M985.5 126.86h2.5M985.5 155.52h2.5M985.5 183.38h2.5M985.5 212.04h2.5M985.5 239.90h2.5M985.5 268.55h2.5M985.5 296.41h2.5M985.5 325.07h2.5M985.5 353.72h2.5M985.5 381.58h2.5M985.5 410.24h2.5M985.5 438.10h2.5" stroke="#e0e0e0" stroke-width="1.3"/><path d="M4.90 442.4v2.6M55.84 442.4v2.6M106.78 442.4v2.6M157.72 442.4v2.6M208.66 442.4v2.6M259.60 442.4v2.6M310.54 442.4v2.6M361.48 442.4v2.6M412.42 442.4v2.6M463.36 442.4v2.6M514.30 442.4v2.6M565.24 442.4v2.6M616.18 442.4v2.6M667.12 442.4v2.6M718.06 442.4v2.6M769.00 442.4v2.6M819.94 442.4v2.6M870.88 442.4v2.6M921.82 442.4v2.6" stroke="#c8c8c8" stroke-width="1"/><rect x="987.2" y="418.3" width="31.5" height="8.9" fill="#fff"/><path d="M12.6 137.4v6.6" stroke="#b0b0b0" stroke-width="0.9" fill="none"/><path d="M12.8 137.6l2.4 2.6" stroke="#a0a0a0" stroke-width="0.9"/><path d="M13.2 141.9l2.6-3.2v1.9h0.6l1.8 1.3l-1.8 1.3h-0.6v1.9z" fill="#1414ff"/><path d="M6.9 91.7h6.2l-3.1 3.4z" fill="#fff"/><circle cx="977" cy="94.8" r="3.9" fill="none" stroke="#e4e4e4" stroke-width="1.05"/><path d="M974.9 95.5q2.1 2.6 4.2 0" stroke="#e4e4e4" stroke-width="0.95" fill="none"/><rect x="975" y="92.9" width="1.3" height="1.3" fill="#e4e4e4"/><rect x="977.8" y="92.9" width="1.3" height="1.3" fill="#e4e4e4"/></svg>
<span class="t" id="t25" style="font-size:8.60px;line-height:8.60px;top:89.40px;color:#fff;left:15.90px;transform-origin:0 50%;transform:scaleX(0.9007);">AUDCAD,M5</span>
<span class="t" id="t26" style="font-size:8.60px;line-height:8.60px;top:89.40px;color:#fff;left:67.20px;transform-origin:0 50%;transform:scaleX(0.8492);">0.91746 0.91793 0.91649 0.91656</span>
<span class="t" id="t27" style="font-size:8.60px;line-height:8.60px;top:89.90px;color:#fff;left:943.90px;transform-origin:0 50%;transform:scaleX(0.9455);">EATOP</span>
<span class="t" id="t28" style="font-size:8.60px;line-height:8.60px;top:132.50px;color:#e8e8e8;left:48.60px;transform-origin:0 50%;transform:scaleX(0.9035);">buy 0.04</span>
<span class="t" id="t29" style="font-size:8.60px;line-height:8.60px;top:94.80px;color:#fff;left:989.60px;transform-origin:0 50%;transform:scaleX(0.8509);">0.92115</span>
<span class="t" id="t30" style="font-size:8.60px;line-height:8.60px;top:122.66px;color:#fff;left:989.60px;transform-origin:0 50%;transform:scaleX(0.8334);">0.92075</span>
<span class="t" id="t31" style="font-size:8.60px;line-height:8.60px;top:151.32px;color:#fff;left:989.60px;transform-origin:0 50%;transform:scaleX(0.8334);">0.92035</span>
<span class="t" id="t32" style="font-size:8.60px;line-height:8.60px;top:179.18px;color:#fff;left:989.60px;transform-origin:0 50%;transform:scaleX(0.8334);">0.91995</span>
<span class="t" id="t33" style="font-size:8.60px;line-height:8.60px;top:207.84px;color:#fff;left:989.60px;transform-origin:0 50%;transform:scaleX(0.8334);">0.91955</span>
<span class="t" id="t34" style="font-size:8.60px;line-height:8.60px;top:235.70px;color:#fff;left:989.60px;transform-origin:0 50%;transform:scaleX(0.8334);">0.91915</span>
<span class="t" id="t35" style="font-size:8.60px;line-height:8.60px;top:264.35px;color:#fff;left:989.60px;transform-origin:0 50%;transform:scaleX(0.8334);">0.91875</span>
<span class="t" id="t36" style="font-size:8.60px;line-height:8.60px;top:292.21px;color:#fff;left:989.60px;transform-origin:0 50%;transform:scaleX(0.8334);">0.91835</span>
<span class="t" id="t37" style="font-size:8.60px;line-height:8.60px;top:320.87px;color:#fff;left:989.60px;transform-origin:0 50%;transform:scaleX(0.8334);">0.91795</span>
<span class="t" id="t38" style="font-size:8.60px;line-height:8.60px;top:349.52px;color:#fff;left:989.60px;transform-origin:0 50%;transform:scaleX(0.8334);">0.91755</span>
<span class="t" id="t39" style="font-size:8.60px;line-height:8.60px;top:377.38px;color:#fff;left:989.60px;transform-origin:0 50%;transform:scaleX(0.8334);">0.91715</span>
<span class="t" id="t40" style="font-size:8.60px;line-height:8.60px;top:406.04px;color:#fff;left:989.60px;transform-origin:0 50%;transform:scaleX(0.8334);">0.91675</span>
<span class="t" id="t41" style="font-size:8.60px;line-height:8.60px;top:433.90px;color:#fff;left:989.60px;transform-origin:0 50%;transform:scaleX(0.8334);">0.91635</span>
<span class="t" id="t42" style="font-size:8.60px;line-height:8.60px;top:418.80px;color:#000;left:989.60px;transform-origin:0 50%;transform:scaleX(0.8334);-webkit-text-stroke:0.25px #000;">0.91656</span>
<span class="t" id="t43" style="font-size:8.60px;line-height:8.60px;top:445.00px;color:#fff;left:3.70px;transform-origin:0 50%;transform:scaleX(0.8552);">5 Dec 2025</span>
<span class="t" id="t44" style="font-size:8.60px;line-height:8.60px;top:445.00px;color:#fff;left:54.64px;transform-origin:0 50%;transform:scaleX(0.8523);">5 Dec 18:05</span>
<span class="t" id="t45" style="font-size:8.60px;line-height:8.60px;top:445.00px;color:#fff;left:105.58px;transform-origin:0 50%;transform:scaleX(0.8523);">5 Dec 18:25</span>
<span class="t" id="t46" style="font-size:8.60px;line-height:8.60px;top:445.00px;color:#fff;left:156.52px;transform-origin:0 50%;transform:scaleX(0.8523);">5 Dec 18:45</span>
<span class="t" id="t47" style="font-size:8.60px;line-height:8.60px;top:445.00px;color:#fff;left:207.46px;transform-origin:0 50%;transform:scaleX(0.8523);">5 Dec 19:05</span>
<span class="t" id="t48" style="font-size:8.60px;line-height:8.60px;top:445.00px;color:#fff;left:258.40px;transform-origin:0 50%;transform:scaleX(0.8523);">5 Dec 19:25</span>
<span class="t" id="t49" style="font-size:8.60px;line-height:8.60px;top:445.00px;color:#fff;left:309.34px;transform-origin:0 50%;transform:scaleX(0.8523);">5 Dec 19:45</span>
<span class="t" id="t50" style="font-size:8.60px;line-height:8.60px;top:445.00px;color:#fff;left:360.28px;transform-origin:0 50%;transform:scaleX(0.8523);">5 Dec 20:05</span>
<span class="t" id="t51" style="font-size:8.60px;line-height:8.60px;top:445.00px;color:#fff;left:411.22px;transform-origin:0 50%;transform:scaleX(0.8523);">5 Dec 20:25</span>
<span class="t" id="t52" style="font-size:8.60px;line-height:8.60px;top:445.00px;color:#fff;left:462.16px;transform-origin:0 50%;transform:scaleX(0.8523);">5 Dec 20:45</span>
<span class="t" id="t53" style="font-size:8.60px;line-height:8.60px;top:445.00px;color:#fff;left:513.10px;transform-origin:0 50%;transform:scaleX(0.8523);">5 Dec 21:05</span>
<span class="t" id="t54" style="font-size:8.60px;line-height:8.60px;top:445.00px;color:#fff;left:564.04px;transform-origin:0 50%;transform:scaleX(0.8523);">5 Dec 21:25</span>
<span class="t" id="t55" style="font-size:8.60px;line-height:8.60px;top:445.00px;color:#fff;left:614.98px;transform-origin:0 50%;transform:scaleX(0.8523);">5 Dec 21:45</span>
<span class="t" id="t56" style="font-size:8.60px;line-height:8.60px;top:445.00px;color:#fff;left:665.92px;transform-origin:0 50%;transform:scaleX(0.8523);">5 Dec 22:05</span>
<span class="t" id="t57" style="font-size:8.60px;line-height:8.60px;top:445.00px;color:#fff;left:716.86px;transform-origin:0 50%;transform:scaleX(0.8523);">5 Dec 22:25</span>
<span class="t" id="t58" style="font-size:8.60px;line-height:8.60px;top:445.00px;color:#fff;left:767.80px;transform-origin:0 50%;transform:scaleX(0.8523);">5 Dec 22:45</span>
<span class="t" id="t59" style="font-size:8.60px;line-height:8.60px;top:445.00px;color:#fff;left:818.74px;transform-origin:0 50%;transform:scaleX(0.8523);">5 Dec 23:05</span>
<span class="t" id="t60" style="font-size:8.60px;line-height:8.60px;top:445.00px;color:#fff;left:869.68px;transform-origin:0 50%;transform:scaleX(0.8523);">5 Dec 23:25</span>
<span class="t" id="t61" style="font-size:8.60px;line-height:8.60px;top:445.00px;color:#fff;left:920.62px;transform-origin:0 50%;transform:scaleX(0.8523);">5 Dec 23:45</span>
<svg class="a" style="left:0;top:457px" width="1024" height="173" viewBox="0 457 1024 173"><defs><linearGradient id="gStrip" x1="0" y1="0" x2="0" y2="1"><stop offset="0" stop-color="#d6e3f1"/><stop offset="1" stop-color="#c2d2e6"/></linearGradient></defs><rect x="1.3" y="473.5" width="10.9" height="134.1" fill="url(#gStrip)"/><path d="M4.4 464.6l3.8 3.8M8.2 464.6l-3.8 3.8" stroke="#222" stroke-width="1.3"/><rect x="13" y="462.2" width="1007.1" height="128.5" fill="#fff"/><path d="M13 590.7V462.2H1020.1" stroke="#a8a8a8" stroke-width="1" fill="none"/><path d="M13.5 482.3H1020" stroke="#dadada" stroke-width="1"/><path d="M112.3 462.8V497.9M250.0 462.8V497.9M318.1 462.8V497.9M371.4 462.8V497.9M439.7 462.8V497.9M515.8 462.8V497.9M592.5 462.8V497.9M668.8 462.8V497.9M745.2 462.8V497.9M821.8 462.8V497.9M898.1 462.8V497.9" stroke="#e2e2e2" stroke-width="1"/><rect x="13.4" y="498.2" width="1006.7" height="15.4" fill="#c8c8c8"/><path d="M16.6 485q0-0.6 0.6-0.6h4.6l2.8 2.8v7.6q0 0.6-0.6 0.6h-6.8q-0.6 0-0.6-0.6z" fill="#fcfcfc" stroke="#8a8a8a" stroke-width="0.8"/><path d="M21.8 484.4v2.8h2.8" fill="#e4e4e4" stroke="#8a8a8a" stroke-width="0.7"/><circle cx="24.1" cy="493.5" r="2.8" fill="#2a8ae0" stroke="#1a6ac0" stroke-width="0.5"/><rect x="16.7" y="500.6" width="8.8" height="10.2" rx="1.4" fill="#fbfbfb" stroke="#909090" stroke-width="0.8"/><path d="M20 502.8h2.2v3h1.8l-2.9 3.2l-2.9-3.2h1.8z" fill="#e83a1a"/><path d="M66.2 475.8l2.8-5.2" stroke="#9a9a9a" stroke-width="0.8"/><path d="M1009.2 487.4l5.2 5.2M1014.4 487.4l-5.2 5.2" stroke="#9a9a9a" stroke-width="1.1"/><rect x="15.5" y="589" width="34.1" height="16.6" fill="#fff"/><path d="M13 590.5H15.5V605.6H49.6V590.5H1019.6" stroke="#3c3c3c" stroke-width="1.2" fill="none"/><path d="M104.4 593.2V604.2M158.0 593.2V604.2M201.5 593.2V604.2M263.8 593.2V604.2M337.5 593.2V604.2M399.5 593.2V604.2M445.5 593.2V604.2M480.5 593.2V604.2M530.5 593.2V604.2M588.8 593.2V604.2M642.5 593.2V604.2" stroke="#6a6a6a" stroke-width="0.9"/><path d="M1 610.4H1023" stroke="#c6c6c6" stroke-width="1"/><path d="M1 611.4H1023" stroke="#fafafa" stroke-width="0.8"/><path d="M457.5 613.5V628M550.8 613.5V628M631.8 613.5V628M687.5 613.5V628M798.5 613.5V628M853.8 613.5V628M905.5 613.5V628" stroke="#bdbdbd" stroke-width="1"/><rect x="911.00" y="616.6" width="1.1" height="7.85" fill="#7a9a2a"/><rect x="911.00" y="624.45" width="1.1" height="1.15" fill="#2a5a8a"/><rect x="912.85" y="616.6" width="1.1" height="7.10" fill="#7a9a2a"/><rect x="912.85" y="623.70" width="1.1" height="1.90" fill="#2a5a8a"/><rect x="914.70" y="616.6" width="1.1" height="6.35" fill="#7a9a2a"/><rect x="914.70" y="622.95" width="1.1" height="2.65" fill="#2a5a8a"/><rect x="916.55" y="616.6" width="1.1" height="5.60" fill="#7a9a2a"/><rect x="916.55" y="622.20" width="1.1" height="3.40" fill="#2a5a8a"/><rect x="918.40" y="616.6" width="1.1" height="4.85" fill="#7a9a2a"/><rect x="918.40" y="621.45" width="1.1" height="4.15" fill="#2a5a8a"/><rect x="920.25" y="616.6" width="1.1" height="4.10" fill="#7a9a2a"/><rect x="920.25" y="620.70" width="1.1" height="4.90" fill="#2a5a8a"/><rect x="922.10" y="616.6" width="1.1" height="3.35" fill="#7a9a2a"/><rect x="922.10" y="619.95" width="1.1" height="5.65" fill="#2a5a8a"/><rect x="923.95" y="616.6" width="1.1" height="2.60" fill="#7a9a2a"/><rect x="923.95" y="619.20" width="1.1" height="6.40" fill="#2a5a8a"/><rect x="925.80" y="616.6" width="1.1" height="1.85" fill="#7a9a2a"/><rect x="925.80" y="618.45" width="1.1" height="7.15" fill="#2a5a8a"/><rect x="927.65" y="616.6" width="1.1" height="1.10" fill="#7a9a2a"/><rect x="927.65" y="617.70" width="1.1" height="7.90" fill="#2a5a8a"/><path d="M1022.4 617.6l-11.2 11.2M1022.4 620.2l-8.6 8.6M1022.4 622.8l-6 6M1022.4 625.4l-3.4 3.4" stroke="#6a6a6a" stroke-width="1.1" stroke-dasharray="0.9 0.9"/></svg>
<span class="t" id="t62" style="font-size:9.20px;line-height:9.20px;left:2.60px;top:605.90px;color:#1a1a1a;transform-origin:0 0;transform:rotate(-90deg) scaleX(0.7663);">ターミナル</span>
<span class="t" id="t63" style="font-size:9.50px;line-height:9.50px;top:467.65px;color:#000;left:19.00px;transform-origin:0 50%;transform:scaleX(0.9680);">注文番号</span>
<span class="t" id="t64" style="font-size:9.50px;line-height:9.50px;top:467.65px;color:#000;right:778.70px;transform-origin:100% 50%;transform:scaleX(0.9624);">時間</span>
<span class="t" id="t65" style="font-size:9.50px;line-height:9.50px;top:467.65px;color:#000;right:710.40px;transform-origin:100% 50%;transform:scaleX(0.9680);">取引種別</span>
<span class="t" id="t66" style="font-size:9.50px;line-height:9.50px;top:467.65px;color:#000;right:657.00px;transform-origin:100% 50%;transform:scaleX(0.9624);">数量</span>
<span class="t" id="t67" style="font-size:9.50px;line-height:9.50px;top:467.65px;color:#000;right:588.40px;transform-origin:100% 50%;transform:scaleX(0.9207);">通貨ペア</span>
<span class="t" id="t68" style="font-size:9.50px;line-height:9.50px;top:467.65px;color:#000;right:512.40px;transform-origin:100% 50%;transform:scaleX(0.9624);">価格</span>
<span class="t" id="t69" style="font-size:9.50px;line-height:9.50px;top:467.65px;color:#000;right:435.40px;transform-origin:100% 50%;transform:scaleX(0.9858);">決済逆指値(S/...</span>
<span class="t" id="t70" style="font-size:9.50px;line-height:9.50px;top:467.65px;color:#000;right:359.40px;transform-origin:100% 50%;transform:scaleX(0.9745);">決済指値(T/P)</span>
<span class="t" id="t71" style="font-size:9.50px;line-height:9.50px;top:467.65px;color:#000;right:283.00px;transform-origin:100% 50%;transform:scaleX(0.9624);">価格</span>
<span class="t" id="t72" style="font-size:9.50px;line-height:9.50px;top:467.65px;color:#000;right:206.40px;transform-origin:100% 50%;transform:scaleX(0.9609);">手数料</span>
<span class="t" id="t73" style="font-size:9.50px;line-height:9.50px;top:467.65px;color:#000;right:130.00px;transform-origin:100% 50%;transform:scaleX(0.7208);">スワップ</span>
<span class="t" id="t74" style="font-size:9.50px;line-height:9.50px;top:467.65px;color:#000;right:9.40px;transform-origin:100% 50%;transform:scaleX(0.9256);">損益</span>
<span class="t" id="t75" style="font-size:9.50px;line-height:9.50px;top:485.25px;color:#111;right:775.40px;transform-origin:100% 50%;transform:scaleX(0.9085);">2025.12.05 17:51:00</span>
<span class="t" id="t76" style="font-size:9.50px;line-height:9.50px;top:485.25px;color:#111;right:707.30px;transform-origin:100% 50%;transform:scaleX(1.0243);">buy</span>
<span class="t" id="t77" style="font-size:9.50px;line-height:9.50px;top:485.25px;color:#111;right:653.80px;transform-origin:100% 50%;transform:scaleX(0.9459);">0.04</span>
<span class="t" id="t78" style="font-size:9.50px;line-height:9.50px;top:485.25px;color:#111;right:586.00px;transform-origin:100% 50%;transform:scaleX(0.9849);">audcad</span>
<span class="t" id="t79" style="font-size:9.50px;line-height:9.50px;top:485.25px;color:#111;right:509.70px;transform-origin:100% 50%;transform:scaleX(0.9172);">0.92054</span>
<span class="t" id="t80" style="font-size:9.50px;line-height:9.50px;top:485.25px;color:#111;right:433.10px;transform-origin:100% 50%;transform:scaleX(0.9172);">0.00000</span>
<span class="t" id="t81" style="font-size:9.50px;line-height:9.50px;top:485.25px;color:#111;right:356.70px;transform-origin:100% 50%;transform:scaleX(0.9172);">0.00000</span>
<span class="t" id="t82" style="font-size:9.50px;line-height:9.50px;top:485.25px;color:#111;right:280.30px;transform-origin:100% 50%;transform:scaleX(0.9172);">0.91652</span>
<span class="t" id="t83" style="font-size:9.50px;line-height:9.50px;top:485.25px;color:#111;right:203.70px;transform-origin:100% 50%;transform:scaleX(0.9174);">-66</span>
<span class="t" id="t84" style="font-size:9.50px;line-height:9.50px;top:485.25px;color:#111;right:127.30px;transform-origin:100% 50%;transform:scaleX(0.8307);">2</span>
<span class="t" id="t85" style="font-size:9.50px;line-height:9.50px;top:485.25px;color:#111;right:22.90px;transform-origin:100% 50%;transform:scaleX(0.9132);">-1 807</span>
<span class="t" id="t86" style="font-size:9.50px;line-height:9.50px;top:501.15px;color:#000;left:31.30px;transform-origin:0 50%;transform:scaleX(0.9684);-webkit-text-stroke:0.32px #000;">残高: 299 664 JPY</span>
<span class="t" id="t87" style="font-size:9.50px;line-height:9.50px;top:501.15px;color:#000;left:113.30px;transform-origin:0 50%;transform:scaleX(0.9859);-webkit-text-stroke:0.32px #000;">有効証拠金: 297 793</span>
<span class="t" id="t88" style="font-size:9.50px;line-height:9.50px;top:501.15px;color:#000;left:205.10px;transform-origin:0 50%;transform:scaleX(0.9878);-webkit-text-stroke:0.32px #000;">必要証拠金: 825</span>
<span class="t" id="t89" style="font-size:9.50px;line-height:9.50px;top:501.15px;color:#000;left:279.00px;transform-origin:0 50%;-webkit-text-stroke:0.32px #000;">余剰証拠金: 296 968</span>
<span class="t" id="t90" style="font-size:9.50px;line-height:9.50px;top:501.15px;color:#000;left:372.20px;transform-origin:0 50%;transform:scaleX(0.9913);-webkit-text-stroke:0.32px #000;">証拠金維持率: 36093.67%</span>
<span class="t" id="t91" style="font-size:9.50px;line-height:9.50px;top:501.15px;color:#000;right:23.40px;transform-origin:100% 50%;transform:scaleX(0.8650);-webkit-text-stroke:0.32px #000;">-1 871</span>
<span class="t" id="t92" style="font-size:9.90px;line-height:9.90px;top:593.05px;color:#000;font-weight:500;left:23.80px;transform-origin:0 50%;transform:scaleX(0.8854);">取引</span>
<span class="t" id="t93" style="font-size:9.90px;line-height:9.90px;top:593.05px;color:#6a6a6a;left:58.75px;transform-origin:0 50%;transform:scaleX(0.9325);">運用比率</span>
<span class="t" id="t94" style="font-size:9.90px;line-height:9.90px;top:593.05px;color:#6a6a6a;left:113.75px;transform-origin:0 50%;transform:scaleX(0.9047);">口座履歴</span>
<span class="t" id="t95" style="font-size:9.90px;line-height:9.90px;top:593.05px;color:#6a6a6a;left:167.00px;transform-origin:0 50%;transform:scaleX(0.6664);">ニュース</span>
<span class="t" id="t96" style="font-size:9.90px;line-height:9.90px;top:593.05px;color:#6a6a6a;left:209.50px;transform-origin:0 50%;transform:scaleX(0.7716);">アラーム設定</span>
<span class="t" id="t97" style="font-size:9.90px;line-height:9.90px;top:593.05px;color:#6a6a6a;left:271.25px;transform-origin:0 50%;transform:scaleX(0.7154);">メールボックス</span>
<span class="t" id="t98" style="font-size:9.90px;line-height:9.90px;top:593.05px;color:#6a6a6a;left:345.00px;transform-origin:0 50%;transform:scaleX(0.6732);">マーケット</span>
<span class="t" id="t99" style="font-size:9.90px;line-height:9.90px;top:593.05px;color:#6a6a6a;left:408.00px;transform-origin:0 50%;transform:scaleX(0.7149);">シグナル</span>
<span class="t" id="t100" style="font-size:9.90px;line-height:9.90px;top:593.05px;color:#6a6a6a;left:454.50px;transform-origin:0 50%;transform:scaleX(0.8854);">記事</span>
<span class="t" id="t101" style="font-size:9.90px;line-height:9.90px;top:593.05px;color:#6a6a6a;left:488.75px;transform-origin:0 50%;transform:scaleX(0.6732);">ライブラリ</span>
<span class="t" id="t102" style="font-size:9.90px;line-height:9.90px;top:593.05px;color:#6a6a6a;left:538.00px;transform-origin:0 50%;transform:scaleX(0.7038);">エキスパート</span>
<span class="t" id="t103" style="font-size:9.90px;line-height:9.90px;top:593.05px;color:#6a6a6a;left:596.75px;transform-origin:0 50%;transform:scaleX(0.9174);">操作履歴</span>
<span class="t" id="t104" style="font-size:7.40px;line-height:7.40px;top:598.00px;color:#e02020;font-weight:bold;left:322.50px;transform-origin:0 50%;transform:scaleX(0.8258);">18</span>
<span class="t" id="t105" style="font-size:7.40px;line-height:7.40px;top:598.00px;color:#e02020;font-weight:bold;left:380.50px;transform-origin:0 50%;transform:scaleX(0.8749);">105</span>
<span class="t" id="t106" style="font-size:9.40px;line-height:9.40px;top:616.30px;color:#000;left:2.80px;transform-origin:0 50%;transform:scaleX(0.8339);">F1キーでヘルプが表示されます</span>
<span class="t" id="t107" style="font-size:9.40px;line-height:9.40px;top:616.30px;color:#000;left:463.30px;transform-origin:0 50%;transform:scaleX(0.9825);">Default</span>
<span class="t" id="t108" style="font-size:9.40px;line-height:9.40px;top:616.30px;color:#000;left:931.80px;transform-origin:0 50%;transform:scaleX(0.9480);">2018723/1292 kb</span>
<svg class="a" style="left:0;top:0;pointer-events:none" width="1024" height="630" viewBox="0 0 1024 630"><rect x="0" y="0" width="1" height="630" fill="#2c3c50"/><rect x="0" y="0" width="1024" height="0.9" fill="#3a4658"/><rect x="1022.8" y="0" width="1.2" height="630" fill="#2c4258"/><rect x="0" y="628.8" width="1024" height="1.2" fill="#2c4258"/></svg>
</body>
</html>
